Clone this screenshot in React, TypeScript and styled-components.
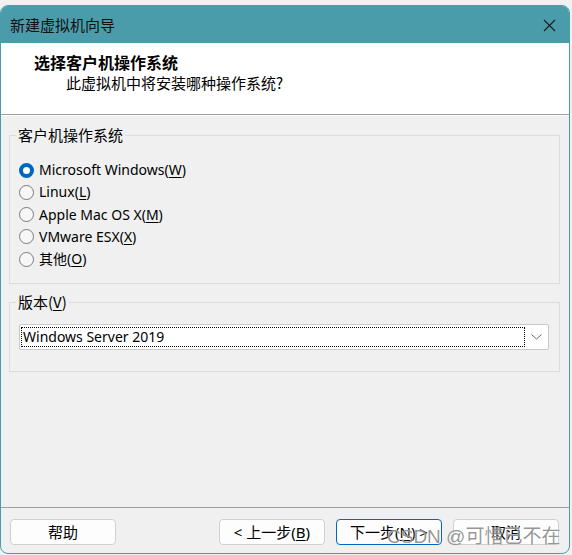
import React from "react";
import styled, { createGlobalStyle } from "styled-components";

const GlobalStyle = createGlobalStyle`
  html, body {
    margin: 0;
    padding: 0;
    background: #f1f1f1;
  }
  body {
    padding-top: 5px;
    font-family: "Noto Sans", "Noto Sans CJK SC", sans-serif;
    color: #000;
  }
`;

const osOptions = [
  { label: "Microsoft Windows", key: "W" },
  { label: "Linux", key: "L" },
  { label: "Apple Mac OS X", key: "M" },
  { label: "VMware ESX", key: "X" },
  { label: "其他", key: "O" },
];

function App() {
  const selected = "W";

  return (
    <>
      <GlobalStyle />
      <Window>
        <TitleBar>
          <TitleText>新建虚拟机向导</TitleText>
          <CloseButton>
            <svg width="13" height="13" viewBox="0 0 13 13">
              <path d="M1 1 L12 12 M12 1 L1 12" stroke="#1c1c1c" strokeWidth="1.1" fill="none" />
            </svg>
          </CloseButton>
        </TitleBar>

        <Header>
          <Heading>选择客户机操作系统</Heading>
          <SubHeading>此虚拟机中将安装哪种操作系统?</SubHeading>
        </Header>

        <Body>
          <GroupBox>
            <GroupLegend>客户机操作系统</GroupLegend>
            <RadioList>
              {osOptions.map((opt) => (
                <RadioRow key={opt.key}>
                  <RadioDot $checked={opt.key === selected} />
                  <RadioLabel>
                    {opt.label}(<AccessKey>{opt.key}</AccessKey>)
                  </RadioLabel>
                </RadioRow>
              ))}
            </RadioList>
          </GroupBox>

          <VersionBox>
            <GroupLegend>
              版本(<AccessKey>V</AccessKey>)
            </GroupLegend>
            <Select>
              <SelectValue>
                <FocusRing>Windows Server 2019</FocusRing>
              </SelectValue>
              <Chevron>
                <svg width="11" height="6" viewBox="0 0 11 6">
                  <path d="M0.5 0.5 L5.5 5 L10.5 0.5" stroke="#6b6b6b" strokeWidth="1" fill="none" />
                </svg>
              </Chevron>
            </Select>
          </VersionBox>
        </Body>

        <Footer>
          <Button>帮助</Button>
          <ButtonGroup>
            <Button>
              &lt; 上一步(<AccessKey>B</AccessKey>)
            </Button>
            <Button $primary>
              下一步(<AccessKey>N</AccessKey>) &gt;
            </Button>
            <Button>取消</Button>
          </ButtonGroup>
        </Footer>

        <Watermark>CSDN @可惜已不在</Watermark>
      </Window>
    </>
  );
}

const Window = styled.div`
  position: relative;
  box-sizing: border-box;
  width: 570px;
  height: 549px;
  border: 1px solid #4a9cab;
  border-radius: 8px;
  overflow: hidden;
  background: #f0f0f0;
  display: flex;
  flex-direction: column;
`;

const TitleBar = styled.div`
  height: 37px;
  flex-shrink: 0;
  background: #4a9cab;
  display: flex;
  align-items: center;
  justify-content: space-between;
  padding: 0 13px 0 9px;
`;

const TitleText = styled.div`
  font-family: "Noto Sans CJK SC", sans-serif;
  font-size: 15px;
  color: #111;
  line-height: 20px;
  padding-top: 1px;
`;

const CloseButton = styled.div`
  width: 13px;
  height: 13px;
  display: flex;
  margin-top: 1px;
`;

const Header = styled.div`
  height: 72px;
  flex-shrink: 0;
  background: #fff;
  border-bottom: 1px solid #a0a0a0;
  box-sizing: border-box;
  padding: 9px 0 0 33px;
`;

const Heading = styled.div`
  font-family: "Noto Sans CJK SC", sans-serif;
  font-weight: 700;
  font-size: 16px;
  line-height: 20px;
`;

const SubHeading = styled.div`
  font-family: "Noto Sans CJK SC", sans-serif;
  font-size: 15px;
  line-height: 20px;
  margin: 1px 0 0 32px;
`;

const Body = styled.div`
  flex: 1;
  border-top: 1px solid #fff;
  padding: 9px 9px 0 8px;
`;

const GroupBox = styled.fieldset`
  margin: 0;
  min-width: 0;
  border: 1px solid #dcdcdc;
  padding: 14px 4px 13px 5px;
`;

const VersionBox = styled(GroupBox)`
  margin-top: 8px;
  padding: 12px 10px 21px 5px;
`;

const GroupLegend = styled.legend`
  font-family: "Noto Sans CJK SC", sans-serif;
  font-size: 15px;
  line-height: 20px;
  padding: 0 2px;
  margin-left: 1px;
`;

const RadioList = styled.div`
  display: flex;
  flex-direction: column;
  padding-left: 4px;
`;

const RadioRow = styled.div`
  display: flex;
  align-items: center;
  height: 22.25px;
  gap: 5px;
`;

const RadioDot = styled.span<{ $checked?: boolean }>`
  box-sizing: border-box;
  width: 15px;
  height: 15px;
  border-radius: 50%;
  border: ${(p) => (p.$checked ? "4.5px solid #0067c0" : "1px solid #7a7a7a")};
  background: ${(p) => (p.$checked ? "#fff" : "#f7f7f7")};
  flex-shrink: 0;
`;

const RadioLabel = styled.span`
  font-family: "Noto Sans", "Noto Sans CJK SC", sans-serif;
  font-size: 14px;
  line-height: 20px;
`;

const AccessKey = styled.u`
  text-decoration: underline;
  text-underline-offset: 2px;
`;

const Select = styled.div`
  box-sizing: border-box;
  height: 26px;
  margin-left: 4px;
  background: #fff;
  border: 1px solid #c9c9c9;
  border-radius: 2px;
  display: flex;
  align-items: center;
  padding: 0 0 0 1px;
`;

const SelectValue = styled.div`
  flex: 1;
  height: 20px;
`;

const FocusRing = styled.div`
  box-sizing: border-box;
  height: 20px;
  border: 1px dotted #000;
  font-family: "Noto Sans", sans-serif;
  font-size: 14px;
  line-height: 18px;
  padding-left: 1px;
`;

const Chevron = styled.div`
  width: 23px;
  display: flex;
  justify-content: center;
  align-items: center;
`;

const Footer = styled.div`
  height: 46px;
  flex-shrink: 0;
  border-top: 1px solid #a0a0a0;
  box-sizing: border-box;
  display: flex;
  justify-content: space-between;
  align-items: flex-start;
  padding: 11px 10px 0 9px;
`;

const ButtonGroup = styled.div`
  display: flex;
  gap: 11px;
`;

const Button = styled.button<{ $primary?: boolean }>`
  box-sizing: border-box;
  width: 106px;
  height: 26px;
  padding: 0;
  background: #fdfdfd;
  border: 1px solid ${(p) => (p.$primary ? "#0067c0" : "#d0d0d0")};
  border-radius: 4px;
  font-family: "Noto Sans", "Noto Sans CJK SC", sans-serif;
  font-size: 15px;
  line-height: 22px;
  color: #000;
  text-align: center;
`;

/* translucent site stamp laid over the footer buttons */
const Watermark = styled.div`
  position: absolute;
  left: 386px;
  top: 518px;
  font-family: "Liberation Sans", "Noto Sans CJK SC", sans-serif;
  font-size: 19px;
  line-height: 26px;
  color: rgba(105, 105, 105, 0.7);
  text-shadow: 0 0 1px rgba(255, 255, 255, 0.9);
  white-space: nowrap;
  pointer-events: none;
`;

export default App;
